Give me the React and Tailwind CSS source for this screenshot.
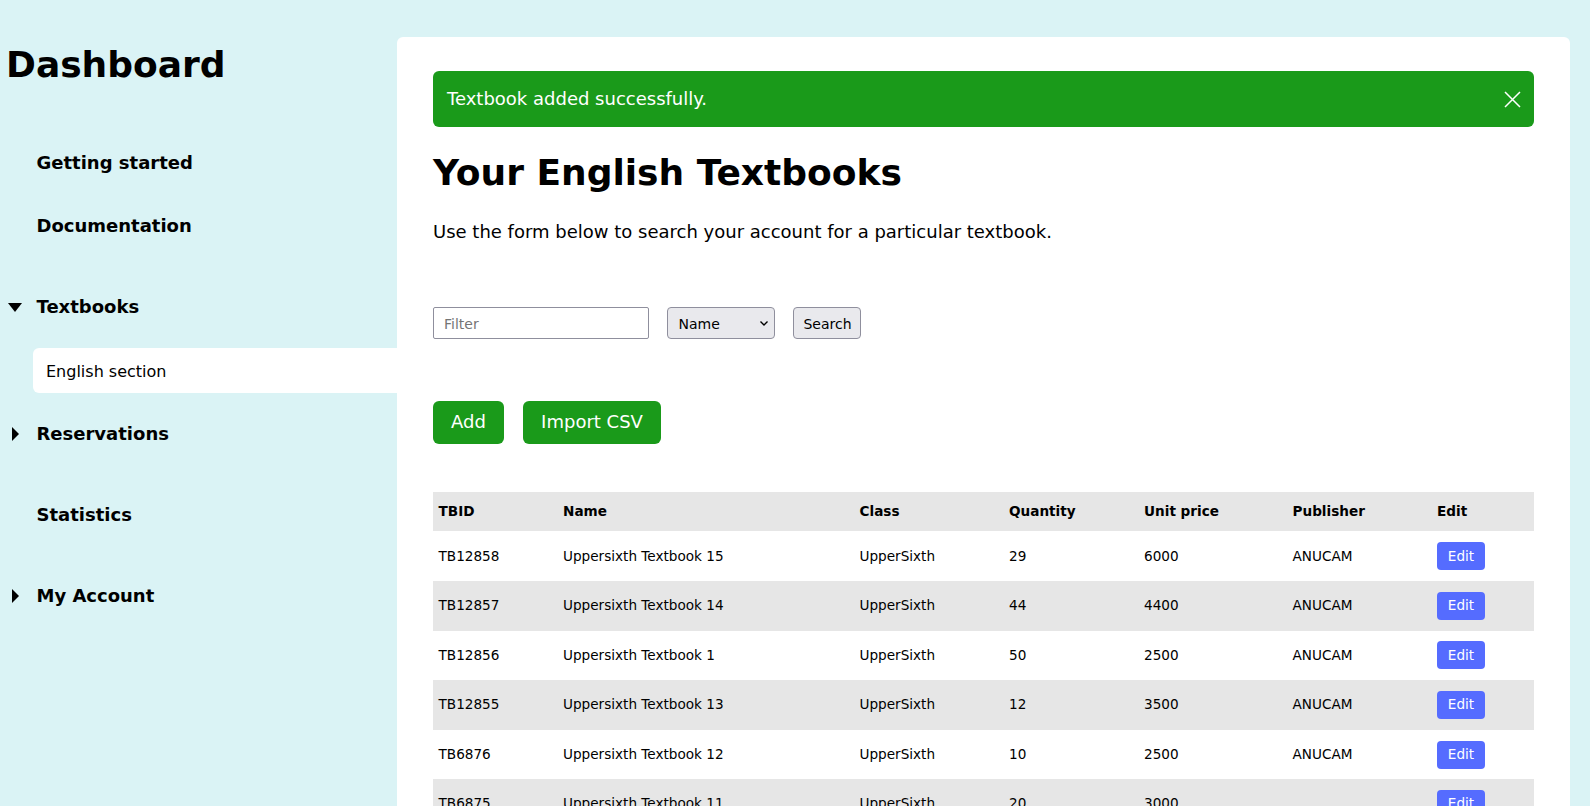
const rows = [
  ["TB12858", "Uppersixth Textbook 15", "UpperSixth", "29", "6000", "ANUCAM"],
  ["TB12857", "Uppersixth Textbook 14", "UpperSixth", "44", "4400", "ANUCAM"],
  ["TB12856", "Uppersixth Textbook 1", "UpperSixth", "50", "2500", "ANUCAM"],
  ["TB12855", "Uppersixth Textbook 13", "UpperSixth", "12", "3500", "ANUCAM"],
  ["TB6876", "Uppersixth Textbook 12", "UpperSixth", "10", "2500", "ANUCAM"],
  ["TB6875", "Uppersixth Textbook 11", "UpperSixth", "20", "3000", ""],
];

const headers = ["TBID", "Name", "Class", "Quantity", "Unit price", "Publisher", "Edit"];
const widths = [124.5, 296.5, 149.5, 135, 148.5, 144.5, 102.5];

function CaretDown() {
  return (
    <svg width="14" height="9" viewBox="0 0 14 9" className="block">
      <path d="M0 0H14L7 9Z" fill="#000" />
    </svg>
  );
}

function CaretRight() {
  return (
    <svg width="7" height="14" viewBox="0 0 7 14" className="block">
      <path d="M0 0L7 7L0 14Z" fill="#000" />
    </svg>
  );
}

function NavItem({ label, icon, className }) {
  return (
    <div className={`flex h-6 items-center ${className}`}>
      <div className="flex w-[36.5px] shrink-0 justify-center pr-[6.5px]">{icon}</div>
      <span className="text-[18px] leading-6 font-bold text-black">{label}</span>
    </div>
  );
}

export default function App() {
  return (
    <div className="flex h-screen overflow-hidden bg-[#daf3f5] font-['DejaVu_Sans',sans-serif] text-black">
      <aside className="w-[397px] shrink-0">
        <h1 className="mt-[47px] ml-[6px] text-[36px] leading-9 font-bold">Dashboard</h1>
        <nav className="mt-[68px]">
          <NavItem label="Getting started" />
          <NavItem label="Documentation" className="mt-[39px]" />
          <NavItem label="Textbooks" icon={<CaretDown />} className="mt-[57px]" />
          <div className="mt-[29px] ml-[33px] flex h-[45px] items-center rounded-l-md bg-white pt-[3px] pl-[13px] text-[16px]">
            English section
          </div>
          <NavItem label="Reservations" icon={<CaretRight />} className="mt-[29px]" />
          <NavItem label="Statistics" className="mt-[57px]" />
          <NavItem label="My Account" icon={<CaretRight />} className="mt-[57px]" />
        </nav>
      </aside>

      <main className="mt-[37px] mr-[20px] flex-1 overflow-hidden rounded-t-md bg-white px-[36px] pt-[34px]">
        <div className="flex h-[56px] items-center justify-between rounded-md bg-[#1a9a1a] pr-[13px] pl-[14px] text-[18px] text-white">
          <span className="-mt-[2px]">Textbook added successfully.</span>
          <svg width="17" height="17" viewBox="0 0 17 17" stroke="#fff" strokeWidth="1.5" fill="none">
            <path d="M1 1L16 16M16 1L1 16" />
          </svg>
        </div>

        <h2 className="mt-[28px] text-[36px] leading-9 font-bold">Your English Textbooks</h2>
        <p className="mt-[29px] text-[18px] leading-6">
          Use the form below to search your account for a particular textbook.
        </p>

        <form className="mt-[63px] flex h-[32px] items-stretch gap-[18px] text-[14px]">
          <input
            placeholder="Filter"
            className="w-[216px] rounded-[2px] border border-[#8f8f9d] bg-white px-[10px] pt-[2px] placeholder:text-[#757575]"
          />
          <div className="relative w-[108px]">
            <select className="h-full w-full appearance-none rounded-[4px] border border-[#8f8f9d] bg-[#e9e9ed] pt-[2px] pl-[10.5px]">
              <option>Name</option>
            </select>
            <svg
              width="8"
              height="5"
              viewBox="0 0 8 5"
              fill="none"
              stroke="#000"
              strokeWidth="1.4"
              className="pointer-events-none absolute top-[14px] right-[7px]"
            >
              <path d="M0.5 0.5L4 4L7.5 0.5" />
            </svg>
          </div>
          <button type="button" className="w-[68px] rounded-[4px] border border-[#8f8f9d] bg-[#e9e9ed] pt-[2px] pl-[1px]">
            Search
          </button>
        </form>

        <div className="mt-[62px] flex gap-[19px] text-[18px] text-white">
          <button type="button" className="h-[43px] w-[71px] rounded-md bg-[#1a9a1a] pb-[2px]">Add</button>
          <button type="button" className="h-[43px] w-[138px] rounded-md bg-[#1a9a1a] pb-[2px]">Import CSV</button>
        </div>

        <table className="mt-[48px] w-full table-fixed border-collapse text-[13.6px]">
          <colgroup>
            {widths.map((w, i) => (
              <col key={i} style={{ width: w }} />
            ))}
          </colgroup>
          <thead>
            <tr className="h-[39px] bg-[#e6e6e6]">
              {headers.map((h) => (
                <th key={h} className="px-[5.5px] text-left font-bold">{h}</th>
              ))}
            </tr>
          </thead>
          <tbody>
            {rows.map((r, i) => (
              <tr
                key={r[0]}
                className={`${i === 2 || i === 4 ? "h-[49px]" : "h-[50px]"} ${i % 2 === 1 ? "bg-[#e6e6e6]" : ""}`}
              >
                {r.map((c, j) => (
                  <td key={j} className={`px-[5.5px] ${i % 2 === 1 ? "pb-[2px]" : ""}`}>{c}</td>
                ))}
                <td className={`px-[5.5px] ${i === 2 ? "pb-[1px]" : ""}`}>
                  <button
                    type="button"
                    className={`block h-[28px] w-[48px] rounded-[4px] bg-[#556cff] text-[13.6px] text-white ${i % 2 === 1 ? "pb-[2px]" : ""}`}
                  >
                    Edit
                  </button>
                </td>
              </tr>
            ))}
          </tbody>
        </table>
      </main>
    </div>
  );
}
